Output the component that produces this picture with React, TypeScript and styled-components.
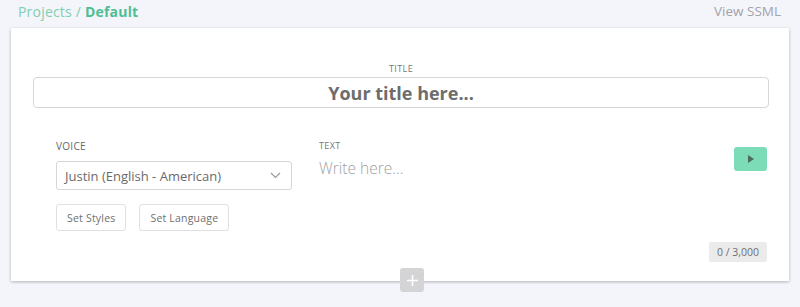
import React from "react";
import styled, { createGlobalStyle } from "styled-components";

const GlobalStyle = createGlobalStyle`
  html, body {
    margin: 0;
    padding: 0;
    background: #f4f5fb;
    font-family: "Open Sans", "Liberation Sans", sans-serif;
  }
`;

const Page = styled.div`
  width: 800px;
  height: 307px;
  padding: 0 11px 0 11px;
  box-sizing: border-box;
  background: #f4f5fb;
  overflow: hidden;
`;

const TopBar = styled.div`
  display: flex;
  justify-content: space-between;
  align-items: center;
  height: 22px;
  padding: 0 8px 0 7px;
  margin-bottom: 6px;
`;

const Crumbs = styled.div`
  font-size: 14px;
  color: #7fcfae;
  letter-spacing: 0.2px;

  b {
    font-weight: 700;
    color: #4dbf93;
  }
`;

const SsmlLink = styled.a`
  font-size: 13.5px;
  color: #a3a3a8;
  cursor: pointer;
`;

const Card = styled.div`
  position: relative;
  background: #fff;
  height: 253px;
  box-sizing: border-box;
  box-shadow: 0 1px 3px rgba(0, 0, 0, 0.28);
  padding: 34px 20px 0 22px;
  display: flex;
  flex-direction: column;
`;

const SmallLabel = styled.div<{ $center?: boolean }>`
  font-size: 9px;
  letter-spacing: 0.4px;
  color: #777;
  text-transform: uppercase;
  text-align: ${(p) => (p.$center ? "center" : "left")};
  margin-bottom: ${(p) => (p.$center ? "2px" : "4px")};
`;

const TitleInput = styled.div`
  height: 31px;
  border: 1px solid #d6d6d8;
  border-radius: 4px;
  box-sizing: border-box;
  display: flex;
  align-items: center;
  justify-content: center;
  font-size: 18px;
  font-weight: 700;
  color: #6d6d6d;
`;

const Row = styled.div`
  display: flex;
  margin-top: 31px;
  padding-left: 23px;
`;

const VoiceCol = styled.div`
  width: 236px;
  display: flex;
  flex-direction: column;
`;

const VoiceLabel = styled.div`
  font-size: 10px;
  color: #666;
  letter-spacing: 0.3px;
  margin-bottom: 8px;
`;

const Select = styled.div`
  height: 29px;
  border: 1px solid #d6d6d8;
  border-radius: 3px;
  box-sizing: border-box;
  display: flex;
  align-items: center;
  justify-content: space-between;
  padding: 0 10px 0 8px;
  font-size: 13px;
  color: #6a6a6a;
`;

const ButtonRow = styled.div`
  display: flex;
  gap: 13px;
  margin-top: 14px;
`;

const GhostButton = styled.button`
  height: 27px;
  padding: 0 10px;
  border: 1px solid #e0e0e2;
  border-radius: 3px;
  background: #fff;
  font-family: inherit;
  font-size: 10.5px;
  letter-spacing: 0.2px;
  color: #6f6f6f;
`;

const TextCol = styled.div`
  flex: 1;
  margin-left: 27px;
  display: flex;
  flex-direction: column;
`;

const WriteArea = styled.div`
  margin-top: 1px;
  font-size: 15.5px;
  font-weight: 300;
  color: #a0a0a4;
`;

const PlayButton = styled.button`
  width: 33px;
  height: 24px;
  margin: 8px 2px 0 0;
  border: none;
  border-radius: 3px;
  background: #7ddcb8;
  display: flex;
  align-items: center;
  justify-content: center;
  padding: 0;
`;

const Counter = styled.div`
  align-self: flex-end;
  margin: auto 2px 19px 0;
  padding: 3px 8px;
  background: #ebebeb;
  border-radius: 2px;
  font-size: 10.5px;
  color: #707070;
`;

const AddButton = styled.button`
  position: absolute;
  left: 389px;
  bottom: -11px;
  width: 24px;
  height: 24px;
  border: none;
  border-radius: 3px;
  background: #d4d4d6;
  display: flex;
  align-items: center;
  justify-content: center;
  padding: 0;
`;

export default function App() {
  return (
    <Page>
      <GlobalStyle />
      <TopBar>
        <Crumbs>
          Projects / <b>Default</b>
        </Crumbs>
        <SsmlLink>View SSML</SsmlLink>
      </TopBar>
      <Card>
        <SmallLabel $center>Title</SmallLabel>
        <TitleInput>Your title here...</TitleInput>
        <Row>
          <VoiceCol>
            <VoiceLabel>VOICE</VoiceLabel>
            <Select>
              <span>Justin (English - American)</span>
              <svg width="11" height="7" viewBox="0 0 11 7">
                <path d="M1 1l4.5 4.5L10 1" fill="none" stroke="#9a9a9a" strokeWidth="1.2" />
              </svg>
            </Select>
            <ButtonRow>
              <GhostButton>Set Styles</GhostButton>
              <GhostButton>Set Language</GhostButton>
            </ButtonRow>
          </VoiceCol>
          <TextCol>
            <SmallLabel>Text</SmallLabel>
            <WriteArea>Write here...</WriteArea>
          </TextCol>
          <PlayButton>
            <svg width="6" height="8" viewBox="0 0 6 8">
              <path d="M0 0l6 4-6 4z" fill="#4f6a60" />
            </svg>
          </PlayButton>
        </Row>
        <Counter>0 / 3,000</Counter>
        <AddButton>
          <svg width="13" height="13" viewBox="0 0 13 13">
            <path d="M6.5 1v11M1 6.5h11" stroke="#fff" strokeWidth="1.6" />
          </svg>
        </AddButton>
      </Card>
    </Page>
  );
}
